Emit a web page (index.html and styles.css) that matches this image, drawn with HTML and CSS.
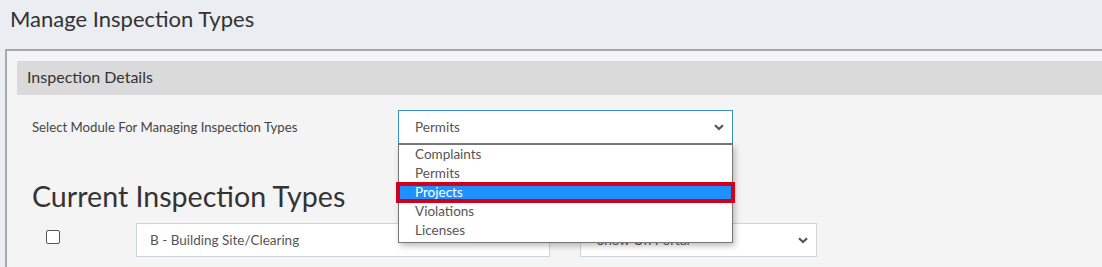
FILE: index.html
```html
<!DOCTYPE html>
<html lang="en">
<head>
    <meta charset="UTF-8">
    <meta name="viewport" content="width=device-width, initial-scale=1.0">
    <title>Manage Inspection Types</title>
    <link rel="stylesheet" href="styles.css">
</head>
<body>
    <h1 class="page-title">Manage Inspection Types</h1>

    <div class="panel">
        <div class="panel-heading">Inspection Details</div>

        <div class="module-row">
            <label class="module-label" for="moduleSelect">Select Module For Managing Inspection Types</label>
            <div class="select-wrap">
                <div class="fake-select focused" id="moduleSelect">
                    <span>Permits</span>
                    <svg class="chevron" width="10" height="7" viewBox="0 0 10 7"><path d="M1 1.2 L5 5 L9 1.2" fill="none" stroke="#555" stroke-width="2.2"/></svg>
                </div>
                <!-- open dropdown list -->
                <ul class="dropdown">
                    <li>Complaints</li>
                    <li>Permits</li>
                    <li class="selected">Projects</li>
                    <li>Violations</li>
                    <li>Licenses</li>
                </ul>
            </div>
        </div>

        <h2 class="section-title">Current Inspection Types</h2>

        <div class="type-row">
            <div class="check-cell"><span class="checkbox"></span></div>
            <div class="fake-input">B - Building Site/Clearing</div>
            <div class="fake-select portal">
                <span>Show On Portal</span>
                <svg class="chevron" width="10" height="7" viewBox="0 0 10 7"><path d="M1 1.2 L5 5 L9 1.2" fill="none" stroke="#555" stroke-width="2.2"/></svg>
            </div>
        </div>
    </div>
</body>
</html>
```

FILE: styles.css
```css
body {
    margin: 0;
    background-color: #eaedf2;
    font-family: Lato, "Noto Sans", sans-serif;
    color: #333;
    overflow: hidden;
}
.page-title {
    margin: 0;
    padding: 5px 0 0 10px;
    height: 44px;
    font-size: 22px;
    font-weight: normal;
    color: #333;
}
.panel {
    margin-left: 5px;
    background-color: #f4f4f4;
    border-top: 2px solid #a8a8a8;
    border-left: 2px solid #a8a8a8;
    padding: 10px 0 0 10px;
    height: 300px;
}
.panel-heading {
    background-color: #dadada;
    height: 34px;
    line-height: 32px;
    padding-left: 10px;
    font-size: 16px;
    color: #333;
}
.module-row {
    display: flex;
    align-items: center;
    margin-top: 15px;
    padding-left: 15px;
}
.module-label {
    width: 366px;
    font-size: 13.2px;
    color: #444;
}
.select-wrap {
    position: relative;
}
.fake-select {
    display: flex;
    align-items: center;
    justify-content: space-between;
    box-sizing: border-box;
    height: 34px;
    background: #fff;
    border: 1px solid #cfd4dc;
    padding: 0 8px 0 16px;
    font-size: 13.5px;
    color: #555;
}
.fake-select.focused {
    width: 335px;
    border-color: #3a8fc7;
}
.dropdown {
    position: absolute;
    top: 34px;
    left: 0;
    width: 335px;
    box-sizing: border-box;
    margin: 0;
    padding: 0 0 2px;
    list-style: none;
    background: #fff;
    border: 1px solid #767676;
    box-shadow: 2px 3px 6px rgba(0, 0, 0, 0.25);
    font-size: 13.5px;
    color: #555;
    z-index: 2;
}
.dropdown li {
    height: 19px;
    line-height: 19px;
    padding-left: 16px;
}
.dropdown li.selected {
    background-color: #1e90ff;
    color: #fff;
    outline: 4px solid #d0021b;
    outline-offset: -3px;
    margin: 0 -2px;
    padding-left: 18px;
    position: relative;
}
.section-title {
    margin: 32px 0 0 15px;
    font-size: 28.6px;
    font-weight: normal;
    color: #333;
    height: 40px;
    line-height: 40px;
}
.type-row {
    display: flex;
    align-items: center;
    margin-top: 7px;
    padding-left: 15px;
}
.check-cell {
    width: 104px;
    align-self: flex-start;
    padding-top: 7px;
}
.checkbox {
    display: block;
    margin-left: 14px;
    width: 12px;
    height: 12px;
    border: 1px solid #555;
    border-radius: 2px;
    background: #fff;
}
.fake-input {
    box-sizing: border-box;
    width: 414px;
    height: 34px;
    line-height: 32px;
    background: #fff;
    border: 1px solid #cfd4dc;
    padding-left: 13px;
    font-size: 13.5px;
    color: #555;
}
.fake-select.portal {
    margin-left: 30px;
    width: 237px;
}
```
